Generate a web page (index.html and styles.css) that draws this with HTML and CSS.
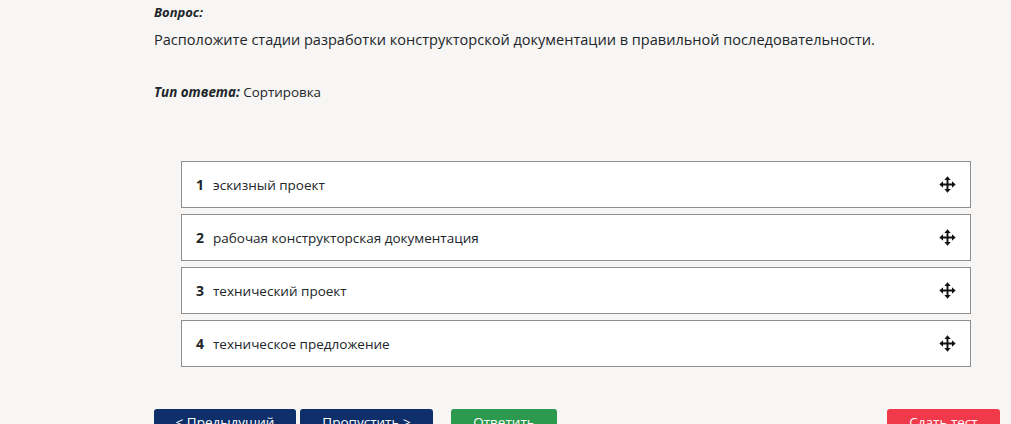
FILE: index.html
```html
<!DOCTYPE html>
<html lang="ru">
<head>
<meta charset="utf-8">
<link rel="stylesheet" href="styles.css">
</head>
<body>
<div class="page">
  <div class="label"><b><i>Вопрос:</i></b></div>
  <div class="question">Расположите стадии разработки конструкторской документации в правильной последовательности.</div>
  <div class="type"><b><i>Тип ответа:</i></b> Сортировка</div>
  <div class="list">
    <div class="item"><span class="num">1</span><span class="txt">эскизный проект</span><svg class="move" viewBox="0 0 16 16"><path d="M8 0.3 L11 3.8 L8.9 3.8 L8.9 7.1 L12.2 7.1 L12.2 5 L15.7 8 L12.2 11 L12.2 8.9 L8.9 8.9 L8.9 12.2 L11 12.2 L8 15.7 L5 12.2 L7.1 12.2 L7.1 8.9 L3.8 8.9 L3.8 11 L0.3 8 L3.8 5 L3.8 7.1 L7.1 7.1 L7.1 3.8 L5 3.8 Z"/></svg></div>
    <div class="item"><span class="num">2</span><span class="txt">рабочая конструкторская документация</span><svg class="move" viewBox="0 0 16 16"><path d="M8 0.3 L11 3.8 L8.9 3.8 L8.9 7.1 L12.2 7.1 L12.2 5 L15.7 8 L12.2 11 L12.2 8.9 L8.9 8.9 L8.9 12.2 L11 12.2 L8 15.7 L5 12.2 L7.1 12.2 L7.1 8.9 L3.8 8.9 L3.8 11 L0.3 8 L3.8 5 L3.8 7.1 L7.1 7.1 L7.1 3.8 L5 3.8 Z"/></svg></div>
    <div class="item"><span class="num">3</span><span class="txt">технический проект</span><svg class="move" viewBox="0 0 16 16"><path d="M8 0.3 L11 3.8 L8.9 3.8 L8.9 7.1 L12.2 7.1 L12.2 5 L15.7 8 L12.2 11 L12.2 8.9 L8.9 8.9 L8.9 12.2 L11 12.2 L8 15.7 L5 12.2 L7.1 12.2 L7.1 8.9 L3.8 8.9 L3.8 11 L0.3 8 L3.8 5 L3.8 7.1 L7.1 7.1 L7.1 3.8 L5 3.8 Z"/></svg></div>
    <div class="item"><span class="num">4</span><span class="txt">техническое предложение</span><svg class="move" viewBox="0 0 16 16"><path d="M8 0.3 L11 3.8 L8.9 3.8 L8.9 7.1 L12.2 7.1 L12.2 5 L15.7 8 L12.2 11 L12.2 8.9 L8.9 8.9 L8.9 12.2 L11 12.2 L8 15.7 L5 12.2 L7.1 12.2 L7.1 8.9 L3.8 8.9 L3.8 11 L0.3 8 L3.8 5 L3.8 7.1 L7.1 7.1 L7.1 3.8 L5 3.8 Z"/></svg></div>
  </div>
  <div class="buttons">
    <button class="btn blue prev">&lt; Предыдущий</button>
    <button class="btn blue skip">Пропустить &gt;</button>
    <button class="btn green answer">Ответить</button>
    <span class="spacer"></span>
    <button class="btn red finish">Сдать тест</button>
  </div>
</div>
</body>
</html>
```

FILE: styles.css
```css
html, body {
  margin: 0;
  padding: 0;
  background: #f7f6f4;
  overflow: hidden;
}
body {
  font-family: "Open Sans", "Noto Sans", sans-serif;
  color: #212529;
}
.page {
  padding: 3px 11px 0 154px;
}
.label {
  font-size: 13px;
  line-height: 18px;
}
.question {
  font-size: 14.55px;
  line-height: 22px;
  margin-top: 7px;
}
.type {
  font-size: 13.4px;
  line-height: 18px;
  margin-top: 33px;
}
.list {
  margin: 60px 29px 0 27px;
  display: flex;
  flex-direction: column;
  gap: 6px;
}
.item {
  height: 45px;
  background: #fff;
  border: 1px solid #8f8f8f;
  display: flex;
  align-items: center;
  padding: 0 14px 0 14px;
  font-size: 13.5px;
}
.num {
  font-weight: 700;
  font-size: 14px;
  margin-right: 9px;
}
.txt {
  flex: 1;
}
.move {
  width: 17px;
  height: 17px;
  fill: #111;
}
.buttons {
  display: flex;
  margin-top: 42px;
}
.btn {
  font-family: inherit;
  font-size: 13.5px;
  line-height: 18px;
  color: #fff;
  border: none;
  border-radius: 3px;
  height: 34px;
  box-sizing: border-box;
  padding: 0 0 8px;
}
.blue { background: #0e2f6a; }
.green { background: #2b9a4e; }
.red { background: #f03a4c; }
.prev { width: 142px; }
.skip { width: 133px; margin-left: 4px; }
.answer { width: 106px; margin-left: 18px; }
.spacer { flex: 1; }
.finish { width: 113px; }
```
